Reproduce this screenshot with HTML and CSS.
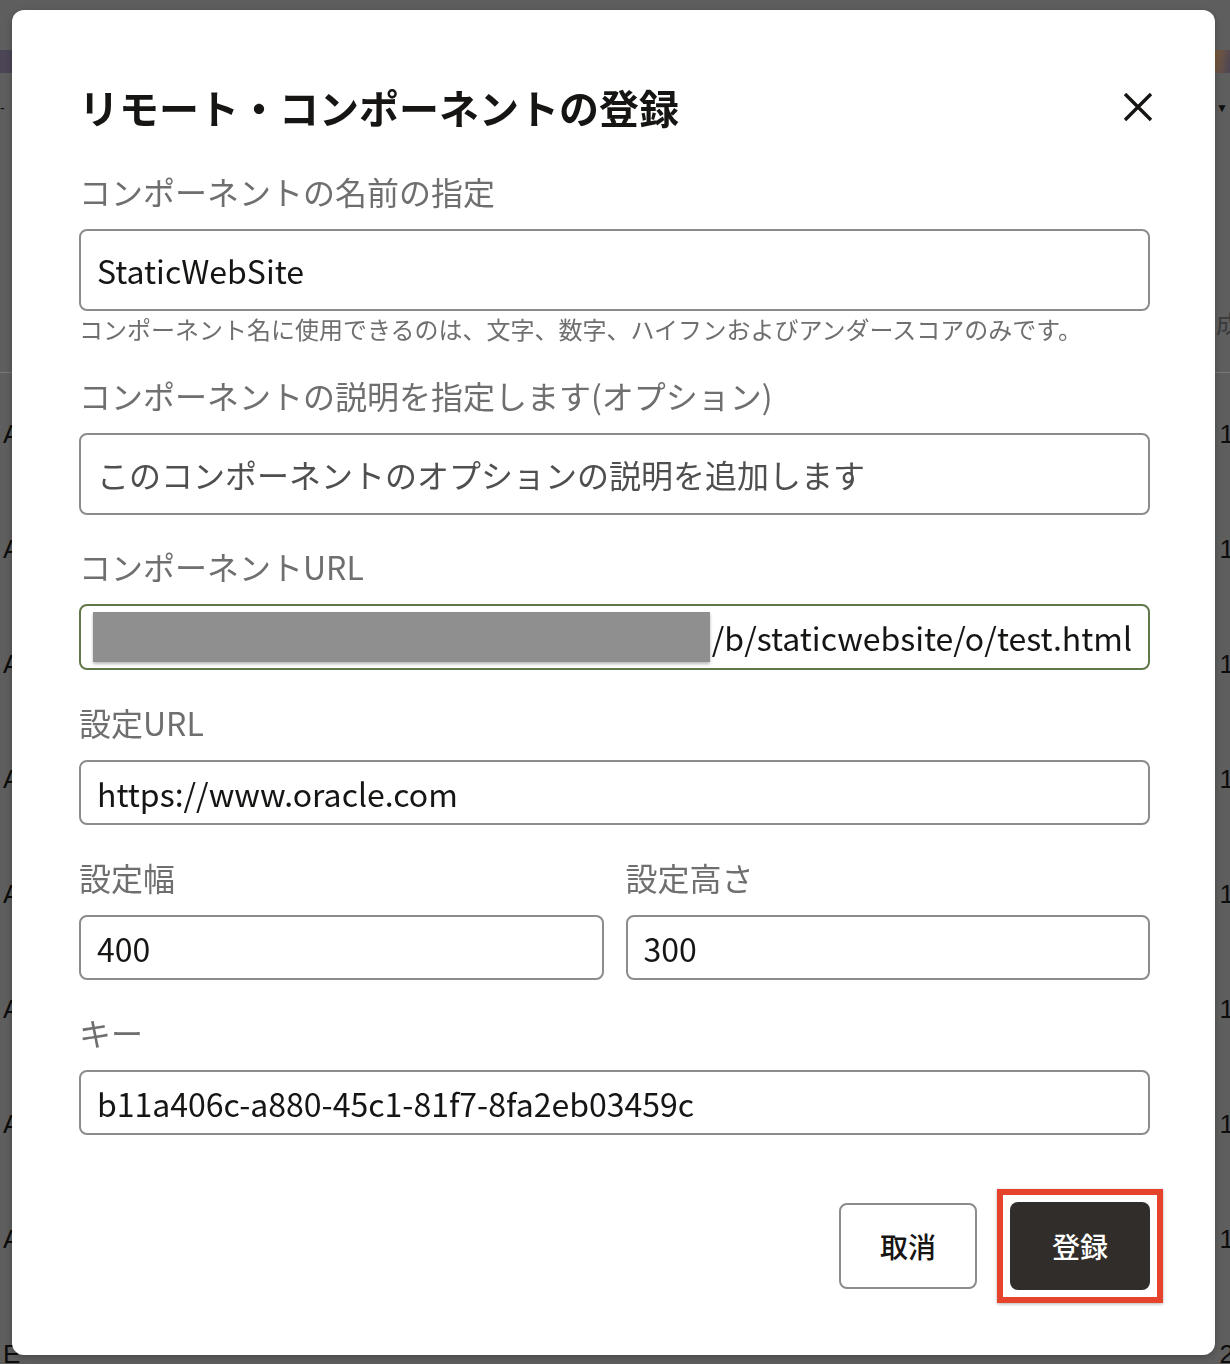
FILE: index.html
```html
<!DOCTYPE html>
<html lang="ja">
<head>
<meta charset="utf-8">
<title>リモート・コンポーネントの登録</title>
<link rel="stylesheet" href="styles.css">
</head>
<body>
<div class="page">
  <div class="page-banner"></div>
  <div class="page-toolbar"><span class="tb-dash">-</span><span class="tb-caret">▼</span></div>
  <div class="page-head"><span></span><span class="head-right">成</span></div>
  <div class="page-rows">
    <div class="page-row"><span>A</span><span>1</span></div>
    <div class="page-row"><span>A</span><span>1</span></div>
    <div class="page-row"><span>A</span><span>1</span></div>
    <div class="page-row"><span>A</span><span>1</span></div>
    <div class="page-row"><span>A</span><span>1</span></div>
    <div class="page-row"><span>A</span><span>1</span></div>
    <div class="page-row"><span>A</span><span>1</span></div>
    <div class="page-row"><span>A</span><span>1</span></div>
    <div class="page-row"><span>E</span><span>2</span></div>
  </div>
</div>

<div class="dialog" role="dialog" aria-labelledby="dlg-title">
  <div class="dialog-header">
    <h1 id="dlg-title" class="dialog-title">リモート・コンポーネントの登録</h1>
    <button class="close-btn" aria-label="閉じる">
      <svg width="30" height="30" viewBox="0 0 30 30" aria-hidden="true">
        <path d="M2 2 L28 28 M28 2 L2 28" stroke="#161513" stroke-width="3.4" fill="none"/>
      </svg>
    </button>
  </div>

  <div class="field f-name">
    <label class="field-label">コンポーネントの名前の指定</label>
    <input class="text-input tall" type="text" value="StaticWebSite">
    <div class="helper">コンポーネント名に使用できるのは、文字、数字、ハイフンおよびアンダースコアのみです。</div>
  </div>

  <div class="field f-desc">
    <label class="field-label">コンポーネントの説明を指定します(オプション)</label>
    <input class="text-input tall" type="text" placeholder="このコンポーネントのオプションの説明を追加します">
  </div>

  <div class="field f-url">
    <label class="field-label">コンポーネントURL</label>
    <div class="text-input url-input">
      <span class="redacted"></span>
      <span class="url-tail">/b/staticwebsite/o/test.html</span>
    </div>
  </div>

  <div class="field">
    <label class="field-label">設定URL</label>
    <input class="text-input" type="text" value="https://www.oracle.com">
  </div>

  <div class="field-pair">
    <div class="field">
      <label class="field-label">設定幅</label>
      <input class="text-input" type="text" value="400">
    </div>
    <div class="field">
      <label class="field-label">設定高さ</label>
      <input class="text-input" type="text" value="300">
    </div>
  </div>

  <div class="field">
    <label class="field-label">キー</label>
    <input class="text-input" type="text" value="b11a406c-a880-45c1-81f7-8fa2eb03459c">
  </div>

  <div class="dialog-footer">
    <button class="btn btn-secondary">取消</button>
    <span class="highlight"><button class="btn btn-primary">登録</button></span>
  </div>
</div>
</body>
</html>
```

FILE: styles.css
```css
* { box-sizing: border-box; }

html, body {
  margin: 0;
  padding: 0;
  height: 100%;
}

body {
  background: #5e5e5e;
  overflow: hidden;
  font-family: "Noto Sans CJK JP", "Noto Sans", sans-serif;
  color: #161513;
}

/* dimmed page behind the dialog */
.page {
  width: 1230px;
  height: 1364px;
  color: #0d0d0d;
  font-family: "Liberation Sans", "Noto Sans CJK JP", sans-serif;
}

.page-banner {
  margin-top: 50px;
  height: 23px;
  background: linear-gradient(100deg, #4b4556 0%, #4b4556 97%, #7a5a3a 98.5%, #4b4556 100%);
}

.page-toolbar {
  height: 100px;
  display: flex;
  justify-content: space-between;
  align-items: center;
  font-size: 14px;
}

.tb-dash { margin-top: -30px; }
.tb-caret { font-size: 12px; margin-top: -30px; margin-right: 2px; }

.page-head {
  height: 200px;
  border-bottom: 1px solid #777;
  display: flex;
  justify-content: space-between;
  align-items: center;
  padding-top: 100px;
  font-size: 24px;
}

.head-right { color: #3a3a3a; margin-right: -10px; }

.page-rows {
  padding-top: 4px;
}

.page-row {
  height: 115px;
  display: flex;
  justify-content: space-between;
  align-items: center;
  font-size: 26px;
  padding-left: 3px;
}

.page-row span:last-child {
  margin-right: -4px;
}

/* dialog */
.dialog {
  position: fixed;
  left: 12px;
  top: 10px;
  width: 1203px;
  height: 1345px;
  background: #ffffff;
  border-radius: 12px;
  padding: 69px 65px 66px 67px;
  box-shadow: 0 2px 6px rgba(0, 0, 0, 0.25);
}

.dialog-header {
  display: flex;
  justify-content: space-between;
  align-items: center;
  height: 56px;
}

.dialog-title {
  margin: 0;
  font-size: 40px;
  line-height: 56px;
  font-weight: 700;
  color: #161513;
}

.close-btn {
  border: 0;
  background: transparent;
  padding: 0;
  width: 30px;
  height: 30px;
  margin-right: -3px;
  cursor: pointer;
}

.field {
  display: flex;
  flex-direction: column;
  margin-top: 34px;
}

.field.f-name { margin-top: 38px; }
.field.f-desc { margin-top: 33px; }
.field.f-url { margin-top: 33px; }

.field-label {
  font-size: 32px;
  line-height: 36px;
  color: #6f6f6f;
  margin-bottom: 20px;
}

.text-input {
  width: 100%;
  height: 65px;
  border: 2px solid #8c8c8c;
  border-radius: 8px;
  padding: 0 16px;
  font-family: "Noto Sans CJK JP", "Noto Sans", sans-serif;
  font-size: 32px;
  color: #161513;
  background: #fff;
  outline: none;
}

.text-input.tall { height: 82px; }

.text-input::placeholder {
  color: #4f4f4f;
  opacity: 1;
}

.url-input {
  height: 66px;
  display: flex;
  align-items: center;
  border-color: #62784b;
  padding: 0 16px 0 12px;
  gap: 2px;
}

.redacted {
  flex: 1;
  height: 50px;
  background: #8f8f8f;
  box-shadow: 0 2px 3px rgba(0, 0, 0, 0.28);
}

.url-tail {
  white-space: nowrap;
  line-height: 1;
}

.helper {
  margin-top: 3px;
  font-size: 24px;
  line-height: 30px;
  color: #6f6f6f;
  white-space: nowrap;
}

.field-pair {
  display: grid;
  grid-template-columns: 1fr 1fr;
  column-gap: 22px;
}

.dialog-footer {
  margin-top: 67px;
  display: flex;
  justify-content: flex-end;
  align-items: center;
  gap: 20px;
}

.btn {
  font-family: "Noto Sans CJK JP", "Noto Sans", sans-serif;
  font-size: 28px;
  font-weight: 500;
  border-radius: 8px;
  cursor: pointer;
}

.btn-secondary {
  width: 138px;
  height: 86px;
  background: #fff;
  border: 2px solid #8c8c8c;
  color: #161513;
}

.btn-primary {
  display: block;
  width: 140px;
  height: 88px;
  background: #312d2a;
  border: 0;
  color: #ffffff;
}

.highlight {
  display: block;
  padding: 7px;
  border: 6px solid #e5432b;
  margin: -13px -13px -13px 0;
  box-shadow: 0 1px 3px rgba(0, 0, 0, 0.3);
}
```
